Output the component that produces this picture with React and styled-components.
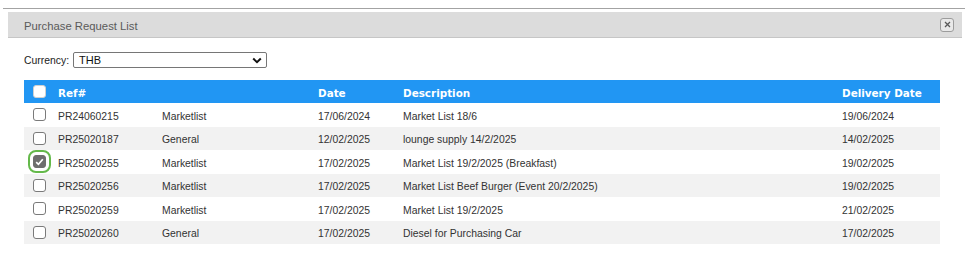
import React, { useState } from "react";
import styled, { createGlobalStyle } from "styled-components";

const GlobalStyle = createGlobalStyle`
  body {
    margin: 0;
    background: #fff;
    font-family: "Liberation Sans", Arial, sans-serif;
  }
`;

const Page = styled.div`
  padding-top: 8px;
`;

const TopRule = styled.div`
  height: 1px;
  background: #a3a3a3;
  margin: 0 4px 0 3px;
`;

const Dialog = styled.div`
  margin: 3px 7px 0 8px;
`;

const TitleBar = styled.div`
  height: 25px;
  background: #dcdcdc;
  border-bottom: 1px solid #c6c6c6;
  display: flex;
  align-items: center;
  justify-content: space-between;
  padding: 0 8px 0 16px;
`;

const Title = styled.span`
  font-size: 11.3px;
  color: #5a5a5a;
  padding-top: 2px;
`;

const CloseButton = styled.button`
  width: 14px;
  height: 14px;
  padding: 0;
  border: 1px solid #9c9c9c;
  border-radius: 3px;
  background: #e9e9e9;
  display: flex;
  align-items: center;
  justify-content: center;
`;

const Body = styled.div`
  padding: 0 22px 0 16px;
`;

const CurrencyRow = styled.div`
  margin-top: 14px;
  display: flex;
  align-items: center;
  height: 16px;
`;

const Label = styled.span`
  font-size: 10.4px;
  color: #222;
  margin-right: 4px;
`;

const SelectBox = styled.div`
  width: 194px;
  height: 16px;
  box-sizing: border-box;
  border: 1px solid #767676;
  border-radius: 2px;
  display: flex;
  align-items: center;
  justify-content: space-between;
  padding: 0 4px 0 5px;
  font-size: 11px;
  color: #111;
`;

const Table = styled.div`
  margin-top: 12px;
`;

const cols = "28px 104px 156px 85px 439px 104px";

const HeadRow = styled.div`
  display: grid;
  grid-template-columns: ${cols};
  height: 23px;
  align-items: center;
  background: #2196f3;
  color: #fff;
  font-family: "DejaVu Sans", Verdana, sans-serif;
  font-weight: bold;
  font-size: 10.4px;
`;

const Row = styled.div`
  display: grid;
  grid-template-columns: ${cols};
  height: 23.5px;
  align-items: center;
  background: ${(p) => (p.$striped ? "#f2f2f2" : "#fff")};
  font-size: 10.4px;
  color: #333;
`;

const Cell = styled.div`
  padding: 3px 0 0 6px;
  white-space: nowrap;
`;

const CheckCell = styled.div`
  padding-left: 9px;
  display: flex;
  align-items: center;
`;

const Box = styled.span`
  width: 13px;
  height: 13px;
  box-sizing: border-box;
  border-radius: 3px;
  border: 1px solid ${(p) => (p.$checked ? "#6e6e6e" : p.$light ? "#d0d0d0" : "#7a7a7a")};
  background: ${(p) => (p.$checked ? "#6e6e6e" : "#fff")};
  display: flex;
  align-items: center;
  justify-content: center;
  outline: ${(p) => (p.$focused ? "2.5px solid #64b94a" : "none")};
  outline-offset: 3px;
`;

const rows = [
  ["PR24060215", "Marketlist", "17/06/2024", "Market List 18/6", "19/06/2024"],
  ["PR25020187", "General", "12/02/2025", "lounge supply 14/2/2025", "14/02/2025"],
  ["PR25020255", "Marketlist", "17/02/2025", "Market List 19/2/2025 (Breakfast)", "19/02/2025"],
  ["PR25020256", "Marketlist", "17/02/2025", "Market List Beef Burger (Event 20/2/2025)", "19/02/2025"],
  ["PR25020259", "Marketlist", "17/02/2025", "Market List 19/2/2025", "21/02/2025"],
  ["PR25020260", "General", "17/02/2025", "Diesel for Purchasing Car", "17/02/2025"],
];

const Check = ({ checked, focused, light, onClick }) => (
  <Box $checked={checked} $focused={focused} $light={light} onClick={onClick}>
    {checked && (
      <svg width="9" height="8" viewBox="0 0 9 8">
        <path d="M1.2 4.2 L3.4 6.3 L7.8 1.3" fill="none" stroke="#fff" strokeWidth="1.7" />
      </svg>
    )}
  </Box>
);

export default function App() {
  const [selected, setSelected] = useState({ 2: true });

  return (
    <Page>
      <GlobalStyle />
      <TopRule />
      <Dialog>
        <TitleBar>
          <Title>Purchase Request List</Title>
          <CloseButton>
            <svg width="7" height="7" viewBox="0 0 7 7">
              <path d="M1 1 L6 6 M6 1 L1 6" stroke="#5a5a5a" strokeWidth="1.3" />
            </svg>
          </CloseButton>
        </TitleBar>
        <Body>
          <CurrencyRow>
            <Label>Currency:</Label>
            <SelectBox>
              <span>THB</span>
              <svg width="10" height="7" viewBox="0 0 10 7">
                <path d="M1.2 1.5 L5 5.2 L8.8 1.5" fill="none" stroke="#111" strokeWidth="2" />
              </svg>
            </SelectBox>
          </CurrencyRow>
          <Table>
            <HeadRow>
              <CheckCell>
                <Check light />
              </CheckCell>
              <Cell>Ref#</Cell>
              <Cell />
              <Cell>Date</Cell>
              <Cell>Description</Cell>
              <Cell>Delivery Date</Cell>
            </HeadRow>
            {rows.map((r, i) => (
              <Row key={r[0]} $striped={i % 2 === 1}>
                <CheckCell>
                  <Check
                    checked={!!selected[i]}
                    focused={i === 2}
                    onClick={() => setSelected({ ...selected, [i]: !selected[i] })}
                  />
                </CheckCell>
                {r.map((c, j) => (
                  <Cell key={j}>{c}</Cell>
                ))}
              </Row>
            ))}
          </Table>
        </Body>
      </Dialog>
    </Page>
  );
}
